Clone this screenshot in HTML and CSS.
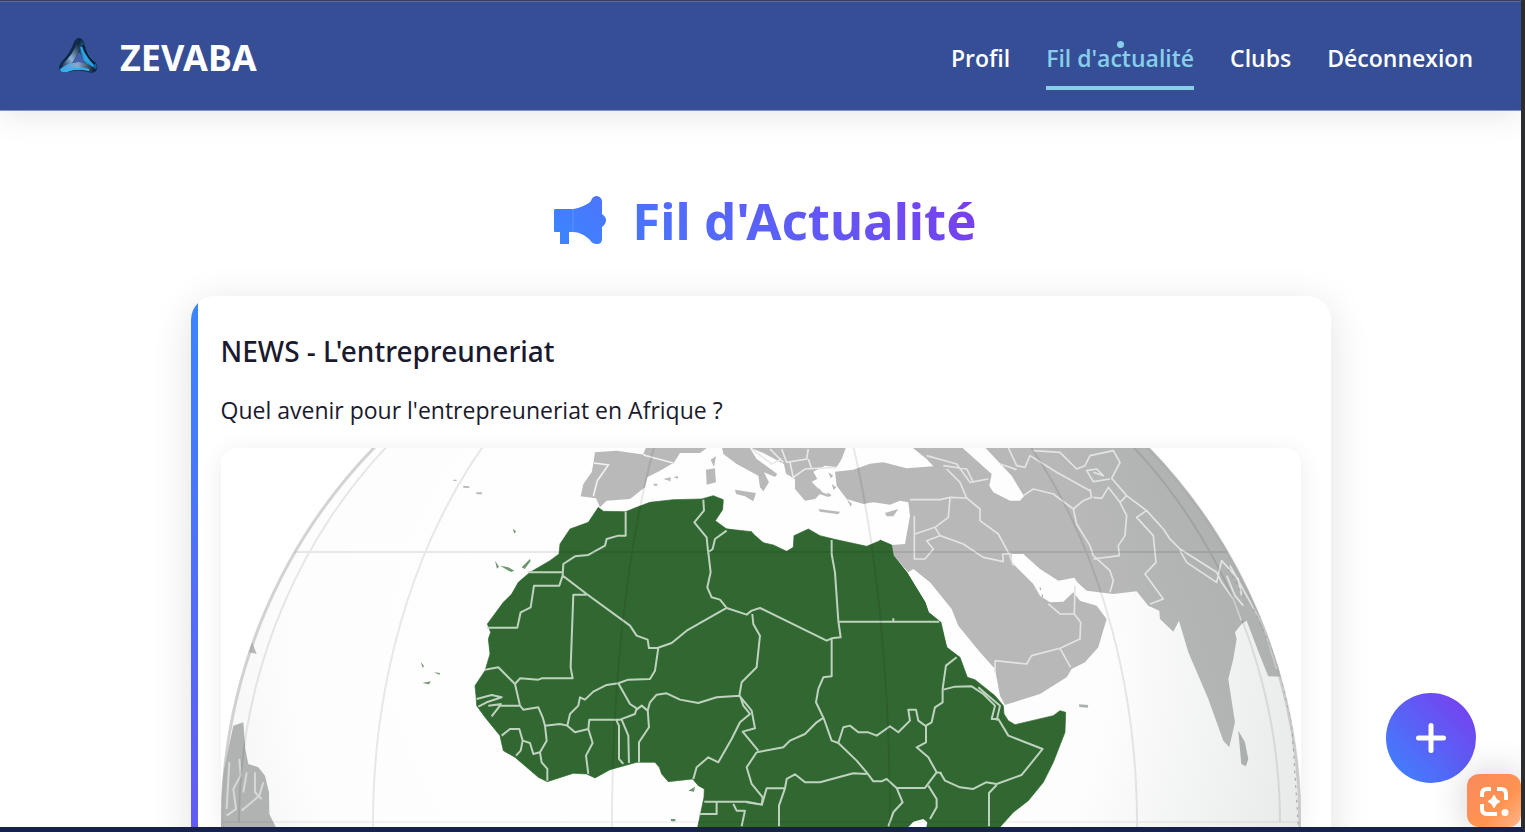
FILE: index.html
```html
<!DOCTYPE html>
<html lang="fr">
<head>
<meta charset="utf-8">
<meta name="viewport" content="width=device-width, initial-scale=1">
<title>ZEVABA - Fil d'actualité</title>
<link rel="stylesheet" href="styles.css">
</head>
<body>
<div class="window">
  <header class="topbar">
    <a class="brand" href="#">
      <svg class="brand-logo" viewBox="0 0 60 60" aria-hidden="true">
        <defs>
          <linearGradient id="lg1" x1="0" y1="1" x2="1" y2="0"><stop offset="0" stop-color="#0b1c3a"/><stop offset=".45" stop-color="#8fb4d8"/><stop offset="1" stop-color="#061326"/></linearGradient>
          <linearGradient id="lg2" x1="0" y1="0" x2="1" y2="1"><stop offset="0" stop-color="#07162c"/><stop offset=".5" stop-color="#35a9e4"/><stop offset="1" stop-color="#0d4f86"/></linearGradient>
          <linearGradient id="lg3" x1="0" y1="0" x2="1" y2="0"><stop offset="0" stop-color="#29a3e6"/><stop offset=".5" stop-color="#87a8d2"/><stop offset="1" stop-color="#04101f"/></linearGradient>
        </defs>
        <path d="M31 10 Q34 10 36 14 C38 24 42 30 47 34 Q51 39 48 43 Q45 46 40 44 Q30 41 20 44 Q12 45 11 40 Q11 36 16 31 Q22 25 26 14 Q28 10 31 10Z M31 24 L23 37 Q31 34 39 37Z" fill="#10294f" fill-rule="evenodd"/>
        <path d="M29 15 Q26 25 14 37 Q13 41 18 41 Q25 36 31 23 L32 15Z" fill="url(#lg1)"/>
        <path d="M31 11 L35 13 Q37 24 46 33 Q51 40 47 42 Q38 38 33 27 Q30 20 31 11Z" fill="url(#lg2)"/>
        <path d="M12 41 Q20 34 31 34 Q42 35 48 42 Q44 45 39 43 Q28 40 19 44 Q13 45 12 41Z" fill="url(#lg3)"/>
        <path d="M13 42 Q16 44 21 42 Q32 39 41 42" fill="none" stroke="#2eb5ee" stroke-width="2"/>
        <path d="M35 17 Q38 28 47 36" fill="none" stroke="#0a1830" stroke-width="2"/>
        <path d="M33 19 Q36 30 45 38" fill="none" stroke="#2aa6e8" stroke-width="2"/>
        <path d="M31 24 L25 35 Q31 33 37 35Z" fill="#4660ac"/>
      </svg>
      <span>ZEVABA</span>
    </a>
    <nav class="menu" aria-label="Navigation principale">
      <a href="#">Profil</a>
      <a class="active" href="#" aria-current="page">Fil d'actualité</a>
      <a href="#">Clubs</a>
      <a href="#">Déconnexion</a>
    </nav>
  </header>

  <main class="feed">
    <h1 class="feed-title">
      <svg class="megaphone" viewBox="0 0 52 48" aria-hidden="true">
        <defs><linearGradient id="mg" x1="0" y1="1" x2="1" y2="0"><stop offset="0" stop-color="#3a86ff"/><stop offset="1" stop-color="#4d74fb"/></linearGradient></defs>
        <path fill="url(#mg)" d="M1 13 H19 C27 12 34 8 37 5 C38 1 41 0 43 0 Q48 1 48 6 V18 Q52 21 52 24 Q52 28 48 31 V43 Q48 48 43 48 Q38 48 36 44 C31 39 25 36 19 36 H15 V48 H6 V36 H1 Q0 36 0 35 V14 Q0 13 1 13Z"/>
        <path d="M19 13 V36" stroke="#5a93ff" stroke-width="1"/>
      </svg>
      <span class="title-text">Fil d'Actualité</span>
    </h1>

    <article class="card">
      <h2>NEWS - L'entrepreuneriat</h2>
      <p>Quel avenir pour l'entrepreuneriat en Afrique ?</p>
      <svg class="map" viewBox="221 449 1080 379" role="img" aria-label="Carte de l'Afrique">
        <defs>
          <clipPath id="globe"><circle cx="761" cy="824" r="540"/></clipPath>
          <radialGradient id="sea" gradientUnits="userSpaceOnUse" cx="700" cy="650" r="680"><stop offset="0" stop-color="#fff"/><stop offset=".6" stop-color="#fdfdfd"/><stop offset="1" stop-color="#e2e4e4"/></radialGradient>
          <linearGradient id="land" gradientUnits="userSpaceOnUse" x1="600" y1="300" x2="1150" y2="120"><stop offset="0" stop-color="#b8b8b8"/><stop offset="1" stop-color="#abb0ae"/></linearGradient>
        </defs>
        <rect x="221" y="449" width="1080" height="400" fill="#fff"/>
        <circle cx="761" cy="824" r="540" fill="url(#sea)"/>
        <g clip-path="url(#globe)">
          <g fill="#b9b9b9">
            <g transform="translate(200 440) scale(.3333)">
              <path fill="#b0b3b2" d="M100 860 L130 850 L136 930 L145 975 L175 985 L195 1010 L207 1060 L208 1125 L230 1170 H50 L60 1050Z"/>
              <path fill="none" stroke="#d5d8d7" stroke-width="6" d="M88 970 L80 1110 M118 960 L122 1010 L100 1050 L108 1110 L80 1130 M140 1000 L130 1060 M165 1000 V1060 L185 1080 M190 1030 L178 1070 L125 1115"/>
              <path d="M145 640 l10 -35 15 40z M790 140 l18 2 v5 l-18 -1z M828 160 h18 v6 h-16z M760 122 h10 v4 h-10z"/>
            </g>
            <g transform="translate(460 440) scale(.3333)">
              <path d="M405 40 L470 35 L560 48 L640 72 L600 95 L562 115 L555 145 L510 180 L440 185 L420 205 L408 178 L362 172 L370 135 L395 100 L400 75Z"/>
              <path d="M550 45 L560 20 H750 L720 42 L660 42 L640 74 L600 62Z M738 92 L765 88 L768 130 L740 137Z M752 62 L768 52 L762 84Z M610 120 l22 -5 v12z M640 115 l14 -4 v8z M580 134 h12 v6 h-10z"/>
              <path fill="none" stroke="#f0f0f0" stroke-width="5" d="M402 72 L445 78 L412 125 L400 172 M550 48 L640 72"/>
            </g>
            <g transform="translate(680 440) scale(.3333)">
              <path d="M125 20 H205 L230 60 L292 105 L285 114 L252 100 L267 130 L250 157 L240 145 L235 110 L170 75 L130 45Z M165 152 L228 162 L220 187 L195 172 L168 165Z M415 210 L480 218 L475 226 L420 218Z M615 222 L655 210 L640 232 L620 232Z"/>
              <path d="M195 20 H500 L485 60 L470 85 L435 80 L400 98 L412 120 L395 128 L425 160 L405 180 L375 185 L345 150 L345 120 L318 104 L312 75 L250 42Z"/>
              <path d="M445 100 l15 10 -8 8z M455 135 l14 10 -8 8z M440 160 l15 8 -8 6z M500 180 l16 15 -4 8z M415 145 l12 15 20 8 -2 6 -25 -8z"/>
              <path fill="none" stroke="#e8e8e8" stroke-width="5" d="M215 30 L275 75 L305 60 M305 30 L320 70 L380 60 L385 30 M330 70 L340 115 L375 90 L470 85 M385 60 L395 90 M270 30 L310 70"/>
            </g>
            <g transform="translate(880 440) scale(.3333)">
              <path fill="url(#land)" d="M-135 98 L-80 92 L-30 74 L10 70 L80 88 L160 82 L140 60 L90 20 H1420 V720 L1165 712 L1140 650 L1100 545 L1085 555 L1065 580 L1070 600 L1060 660 L1045 720 L1065 850 L1048 925 L1030 905 L985 780 L925 640 L897 545 L880 578 L840 540 L838 515 L805 500 L770 457 L700 465 L620 455 L592 430 L583 416 L535 425 L480 390 L430 345 L395 345 L395 370 L460 435 L480 470 L510 490 L550 488 L580 460 L600 485 L650 500 L680 540 L665 590 L655 625 L615 670 L575 690 L560 715 L480 765 L375 798 L360 770 L345 690 L300 640 L235 560 L215 510 L150 430 L100 390 L85 400 L40 350 L35 318 L75 315 L90 230 L85 190 L60 185 L30 197 L-20 190 L-50 195 L-100 180 L-130 140Z"/>
              <path fill="#abb0ae" d="M1075 875 L1095 910 L1105 960 L1098 982 L1084 975Z M597 796 l28 2 -2 8 -25 -2z"/>
              <path fill="#fdfdfd" d="M240 20 H310 L395 110 L432 172 L420 185 L390 185 L340 160 L328 140 L335 105Z"/>
              <path fill="none" stroke="#e2e4e2" stroke-width="5" stroke-linejoin="round" d="M90 182 H180 L210 175 L260 177 L240 130 L200 90 M140 50 L230 75 L270 130 L325 120 M190 80 L260 90 L280 130 M260 177 L300 210 L300 245 L355 285 L390 350 L400 380 M210 177 L205 235 L165 265 L105 285 M165 265 L180 290 L250 315 L310 355 L370 368 L368 345 L395 345 M180 290 L140 305 L160 330 L135 360 H103 V230 M345 665 L440 675 L455 650 L540 628 L600 600 L602 550 L583 525 L585 440 M583 525 L540 525 L505 495 M540 628 L572 685 M345 665 V700 M430 170 L460 150 L520 165 L580 210 L590 255 L630 320 L640 350 L690 395 L700 425 L690 460 M580 210 L610 185 L635 175 L630 150 M640 175 L665 178 L685 145 L720 190 L740 230 L735 290 L715 320 L718 350 L640 360 M385 27 L410 80 L435 85 L450 50 L530 100 L630 155 M360 75 L410 92 M460 35 L540 40 L590 90 L615 80 L630 50 L700 35 L720 70 L695 118 L740 170 L800 215 L850 270 L870 300 L900 330 L1010 400 L1025 430 L1060 480 L1085 545 M690 120 L640 128 L620 95 L650 90 L670 110 L640 100 M740 170 L720 190 M800 215 L770 235 L820 290 L828 370 L795 405 L850 480 L810 495 M900 335 L920 370 L1010 430 L1025 365 L1075 420 L1085 470 M1040 410 L1065 470 L1090 500 M1050 380 L1100 470 L1150 560 L1190 690"/>
              <path fill="none" stroke="#9b9f9d" stroke-width="3" stroke-dasharray="8 14" d="M1045 390 L1100 490 M1120 510 L1190 660 L1235 850 L1255 1160 M480 445 l10 35"/>
            </g>
          </g>
          <g fill="#316831" stroke="#316831" stroke-width="2">
            <path transform="translate(460 440) scale(.3333)" d="M415 205 L430 217 L497 218 L530 205 L570 190 L640 182 L725 180 L760 170 L790 182 L788 212 L766 245 L800 270 L880 285 L920 320 V1170 H712 L732 1075 L733 1050 L715 1040 L698 1020 L625 1028 L605 1005 L598 985 L585 970 L530 970 L450 992 L405 1017 L380 1005 L340 1003 L262 1028 L235 1015 L165 955 L130 935 L120 890 L75 835 L50 800 L48 770 L45 740 L75 695 L90 645 L85 600 L92 580 L82 555 L130 490 L155 465 L175 430 L210 400 L270 365 L297 345 L300 315 L330 270 L385 250Z"/>
            <path transform="translate(680 440) scale(.3333)" d="M100 260 L140 270 L215 278 L235 308 L280 318 L320 337 L340 325 L342 290 L385 270 L420 290 L460 300 L560 322 L600 305 L632 318 L640 350 L680 400 L735 490 L745 520 L780 550 L800 625 L835 655 L860 715 L900 738 V1170 H100Z"/>
            <path transform="translate(880 440) scale(.3333)" d="M0 303 L35 318 L40 350 L80 400 L135 490 L145 520 L183 550 L200 625 L240 655 L262 715 L285 722 L345 770 L370 800 L372 825 L385 845 L405 857 L520 830 L540 815 L557 820 L555 880 L520 970 L490 1030 L445 1085 L400 1120 L355 1170 H0Z"/>
          </g>
          <path transform="translate(460 440) scale(.3333)" fill="#316831" opacity=".7" d="M105 365 l12 18 -6 6z M120 380 l25 5 18 10 -10 4z M185 385 l25 -25 2 6 -18 24z M158 270 l10 6 -4 8z M685 1055 l20 -12 -3 15z M632 1140 h14 v7 h-12z M-118 668 l10 14 -4 4z M-98 685 l10 8z M-78 700 l18 2 -2 5z M-113 732 l25 -5 -5 9z"/>
          <path transform="translate(880 440) scale(.3333)" fill="#fff" d="M80 1170 L100 1148 L130 1140 L142 1150 L138 1170Z"/>
          <g fill="none" stroke="#bfd2bf" stroke-width="6" stroke-linejoin="round">
            <path transform="translate(460 440) scale(.3333)" d="M497 218 V290 H475 L440 300 L435 320 L385 348 L345 352 L310 375 L308 410 M205 400 H308 M308 410 L298 440 H222 L212 505 L182 520 L172 566 H82 M308 410 L380 465 L510 560 L530 590 L563 602 L567 627 H592 L635 612 L680 575 L800 507 M380 467 H340 L332 685 L338 718 H245 L235 722 L180 718 L165 735 M75 692 L115 685 L150 720 L165 735 L180 800 H120 L95 832 M50 780 L95 768 L125 775 L80 790 L55 803 M85 800 L125 795 M180 800 L190 812 L235 805 L248 835 L255 860 L260 905 L240 940 L245 970 L262 990 V1025 M125 890 L150 870 H178 L188 905 L182 935 L168 950 M188 905 L210 912 L220 945 L240 940 M255 860 L300 855 L322 860 L330 825 L355 800 L360 775 L375 782 L400 758 L440 738 L475 733 L505 722 L570 720 L585 695 L595 627 M322 860 L345 880 L385 870 L398 912 L378 950 L385 1005 M385 870 L388 842 H480 L525 825 L530 808 L510 795 L475 733 M468 842 L477 860 V960 L490 975 M485 842 L505 890 L507 972 M563 812 L567 865 L537 910 V970 M530 812 L545 800 L563 815 L570 790 L590 767 L620 763 L660 782 L715 792 L770 775 L840 770 M730 182 L732 215 L703 250 L740 295 L745 345 M800 275 L765 300 L758 330 L745 340 L752 400 L742 445 L755 475 L780 482 L800 507 M877 525 L880 555 L900 590 L890 685 L845 730 L838 770 L875 815 L885 868 L848 878 L895 935 M840 770 L850 800 L870 825 L840 850 L815 900 L775 970 L745 955 L710 985 L700 1020 M733 1088 H860 L905 1097 M770 1090 V1125 H718 M820 1095 L830 1115 L855 1115 L845 1162"/>
            <path transform="translate(680 440) scale(.3333)" d="M140 507 L200 527 L215 515 L240 507 L440 605 L455 598 L482 595 L475 545 L465 400 L455 345 V303 M475 548 H778 M640 548 V538 M455 600 V712 L430 715 L415 750 L408 790 L432 840 L455 905 L475 912 L530 965 L560 1000 L580 1027 H605 L620 1020 L650 1047 H735 L770 1000 L785 1002 M432 835 L410 850 L375 885 L330 905 L310 925 L230 940 M475 912 L490 865 L510 860 L535 880 H565 L590 890 L630 862 L655 880 L690 845 L685 812 H708 L715 845 L738 862 V910 L710 925 L745 955 L770 1000 M738 860 L755 850 L765 805 L788 790 V750 L798 680 L830 655 M245 1100 L260 1048 H315 L320 1020 L345 1006 L375 1030 L420 1030 L520 1003 L560 1005 M230 940 L200 985 L215 1035 L248 1075 L245 1097 L200 1090 M315 1048 L297 1100 V1162 M650 1047 L668 1090 L640 1120 L625 1162 M745 1040 L770 1080 V1105 L750 1140"/>
            <path transform="translate(880 440) scale(.3333)" d="M190 752 L225 743 L275 742 L310 765 L345 800 L335 840 H355 L385 890 L488 930 L425 1008 L350 1035 L318 1030 L280 1050 L240 1045 L195 1025 L180 1000 M295 745 L360 800 L350 845 M350 1038 L327 1062 V1162"/>
          </g>
          <g fill="none" stroke="#000" stroke-width="2" opacity=".09">
            <path d="M221 553 H1301"/>
            <path d="M221 823 H1301" opacity=".5"/>
            <path d="M761 284 A149 540 0 0 0 612 824 V830 M761 284 A388 540 0 0 0 373 824 V830 M761 284 A522 540 0 0 0 239 824 M761 284 A129 540 0 0 1 890 824 V830 M761 284 A376 540 0 0 1 1137 824 V830 M761 284 A519 540 0 0 1 1280 824"/>
          </g>
        </g>
        <circle cx="761" cy="824" r="539" fill="none" stroke="#aaa" stroke-width="3" opacity=".5"/>
      </svg>
    </article>
  </main>

  <button class="fab" type="button" aria-label="Nouvelle publication">
    <svg viewBox="0 0 30 30" aria-hidden="true"><path d="M15 2.500 V27.500 M2.500 15 H27.500" stroke="#fff" stroke-width="5" stroke-linecap="round"/></svg>
  </button>
  <button class="capture" type="button" aria-label="Capture">
    <svg viewBox="0 0 30 30" fill="none" aria-hidden="true">
      <path d="M12 3 H8 Q3 3 3 8 V11 M18 3 H22 Q27 3 27 8 V14 M3 18 V23 Q3 28 8 28 H18" stroke="#fff" stroke-width="4"/>
      <path d="M15 9 Q16.500 14 21 15.500 Q16.500 17 15 22 Q13.500 17 9 15.500 Q13.500 14 15 9Z" fill="#fff" stroke="#fff" stroke-width="1"/>
      <circle cx="26" cy="26.500" r="3.500" fill="#fff"/>
    </svg>
  </button>
</div>
</body>
</html>
```
FILE: styles.css
```css
* { box-sizing: border-box; }

body {
  margin: 0;
  font-family: "Noto Sans", "Open Sans", sans-serif;
  color: #1a1a2e;
  background: #17214e;
}

.window {
  position: relative;
  height: 100vh;
  overflow: hidden;
  background: #fff;
  padding: 1px 4px 5px 0;
}

.window::after {
  content: "";
  position: absolute;
  inset: 0;
  border-style: solid;
  border-width: 1px 4px 5px 0;
  border-color: #3a3f55 #2b2d2e #17214e transparent;
  pointer-events: none;
}

.topbar {
  display: flex;
  align-items: center;
  justify-content: space-between;
  height: 110px;
  padding: 4px 48px 0;
  background: #354e96;
  border-top: 1px solid #5c6ba8;
  border-bottom: 1px solid #8093c4;
  box-shadow: 0 4px 30px rgba(0, 0, 0, .1);
}

.brand {
  display: flex;
  align-items: center;
  gap: 12px;
  color: #fff;
  font-size: 36px;
  line-height: 48px;
  font-weight: 700;
  text-decoration: none;
}

.brand-logo { width: 60px; height: 60px; }

.menu { display: flex; gap: 36px; }

.menu a {
  position: relative;
  padding: 12px 0;
  color: #fff;
  font-family: "Open Sans", "Noto Sans", sans-serif;
  font-size: 23px;
  line-height: 36px;
  font-weight: 600;
  text-decoration: none;
}

.menu .active { color: #87ceeb; }

.menu .active::before {
  content: "";
  position: absolute;
  top: 13px;
  left: 50%;
  width: 7px;
  height: 7px;
  margin-left: -3px;
  border-radius: 50%;
  background: #87ceeb;
}

.menu .active::after {
  content: "";
  position: absolute;
  right: 0;
  bottom: -2px;
  left: 0;
  height: 4px;
  background: #87ceeb;
}

.feed {
  max-width: 1140px;
  margin: 0 auto;
  padding-top: 73px;
}

.feed-title {
  display: flex;
  align-items: center;
  justify-content: center;
  gap: 26px;
  margin: 0 0 40px;
  padding-left: 10px;
  font-size: 51px;
  line-height: 72px;
  font-weight: 700;
}

.megaphone { width: 52px; height: 48px; }

.title-text {
  background: linear-gradient(45deg, #4579ff, #7c3aed);
  background-clip: text;
  -webkit-background-clip: text;
  color: transparent;
}

.card {
  position: relative;
  padding: 30px;
  border-radius: 24px;
  background: #fff;
  box-shadow: 0 8px 40px rgba(0, 0, 0, .12);
  overflow: hidden;
}

.card::before {
  content: "";
  position: absolute;
  top: 0;
  bottom: 0;
  left: 0;
  width: 7px;
  background: linear-gradient(#3a86ff, #8338ec) 0 0 / 100% 950px;
}

.card h2 {
  margin: 0 0 16px;
  font-size: 28px;
  line-height: 50px;
  font-weight: 500;
}

.card p {
  margin: 0 0 20px;
  font-family: "Open Sans", "Noto Sans", sans-serif;
  font-size: 23px;
  line-height: 36px;
}

.map {
  display: block;
  width: 100%;
  border-radius: 16px 16px 0 0;
  box-shadow: 0 4px 24px rgba(0, 0, 0, .08);
}

.fab,
.capture {
  position: absolute;
  display: grid;
  place-items: center;
  padding: 0;
  border: 0;
}

.fab {
  right: 49px;
  bottom: 49px;
  width: 90px;
  height: 90px;
  border-radius: 50%;
  background: linear-gradient(45deg, #3a86ff, #7c3aed);
}

.fab svg { width: 30px; height: 30px; }

.capture {
  right: 4px;
  bottom: 5px;
  width: 54px;
  height: 53px;
  border-radius: 12px;
  background: linear-gradient(135deg, #f98a5e, #ff9350 60%, #ffb68a);
  box-shadow: 0 0 36px rgba(0, 0, 0, .2);
}

.capture svg { width: 30px; height: 30px; }
```
